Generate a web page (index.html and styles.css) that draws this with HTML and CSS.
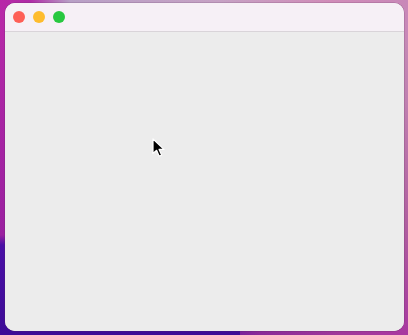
FILE: index.html
```html
<!DOCTYPE html>
<html>
<head>
<meta charset="utf-8">
<link rel="stylesheet" href="styles.css">
</head>
<body>
<div class="desktop">
  <div class="window">
    <div class="titlebar">
      <span class="light red"></span>
      <span class="light yellow"></span>
      <span class="light green"></span>
    </div>
    <div class="content"></div>
  </div>
  <svg class="cursor" width="14" height="20" viewBox="0 0 14 20">
    <path d="M1 1 L1 15.5 L4.6 12.3 L7.2 18.2 L9.6 17.1 L7.1 11.4 L12 11.4 Z" fill="#000" stroke="#fff" stroke-width="1.2" stroke-linejoin="round"/>
  </svg>
</div>
</body>
</html>
```
FILE: styles.css
```css
html, body {
  margin: 0;
  padding: 0;
  width: 408px;
  height: 335px;
  overflow: hidden;
}
.desktop {
  position: relative;
  width: 408px;
  height: 335px;
  box-sizing: border-box;
  padding: 3px 3px 4px 5px;
  background:
    linear-gradient(180deg, rgba(0,0,0,0) 0, rgba(0,0,0,0) 235px, #4a0fa6 245px, #3d0b96 335px) 0 0 / 240px 335px no-repeat,
    linear-gradient(90deg, #b828a8 0, #b02aa6 30px, #b8a0c6 70px, #c6a2c4 220px, #d08cb8 330px, #c888b8 408px) 0 0 / 408px 40px no-repeat,
    linear-gradient(180deg, #c890b8 0, #c080b0 100px, #b0609f 220px, #a8449e 300px, #a838a0 335px) 380px 0 / 28px 335px no-repeat,
    linear-gradient(90deg, #4a10a0 0, #5a12a0 200px, #8a2a98 260px, #a0389a 340px, #a838a0 408px) 0 320px / 408px 15px no-repeat,
    linear-gradient(180deg, #b82aa8 0, #a824a4 120px, #9a20a0 240px, #8a2a9c 300px, #9a2c9a 335px);
}
.window {
  width: 399px;
  height: 328px;
  border-radius: 10px;
  overflow: hidden;
  display: flex;
  flex-direction: column;
  background: #ececec;
  box-shadow: 0 0 0 0.5px rgba(80, 40, 80, 0.35);
}
.titlebar {
  height: 28px;
  flex: none;
  background: #f6f0f6;
  border-bottom: 1px solid #d9d4d9;
  display: flex;
  align-items: center;
  gap: 8px;
  padding-left: 8px;
}
.light {
  width: 12px;
  height: 12px;
  border-radius: 50%;
  display: block;
}
.red { background: #fe5f57; }
.yellow { background: #febc2e; }
.green { background: #28c840; }
.content {
  flex: 1;
  background: #ececec;
}
.cursor {
  position: absolute;
  left: 152px;
  top: 138px;
}
```
